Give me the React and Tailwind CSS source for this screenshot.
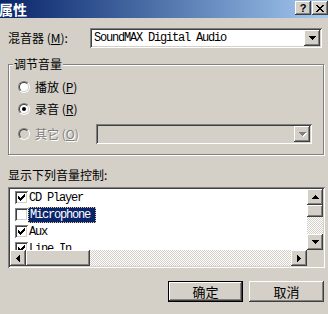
import React from 'react';

const raised = 'bg-[#d4d0c8] shadow-[inset_-1px_-1px_#404040,inset_1px_1px_#ffffff,inset_-2px_-2px_#808080,inset_2px_2px_#d4d0c8]';
const sunken = 'shadow-[inset_1px_1px_#808080,inset_-1px_-1px_#ffffff,inset_2px_2px_#404040,inset_-2px_-2px_#d4d0c8]';
const mono = "font-['Liberation_Mono',monospace] text-[12px] tracking-[-1.2px]";
const checker = 'bg-[image:conic-gradient(#ffffff_25%,#d4d0c8_0_50%,#ffffff_0_75%,#d4d0c8_0)] bg-[length:2px_2px]';
const disabledText = 'text-[#808080] [text-shadow:1px_1px_#ffffff]';

function ArrowDown({ color = '#000' }) {
  return (
    <svg width="7" height="4" viewBox="0 0 7 4">
      <path d="M0 0h7v1H0zM1 1h5v1H1zM2 2h3v1H2zM3 3h1v1H3z" fill={color} />
    </svg>
  );
}

function ArrowUp() {
  return (
    <svg width="7" height="4" viewBox="0 0 7 4">
      <path d="M3 0h1v1H3zM2 1h3v1H2zM1 2h5v1H1zM0 3h7v1H0z" fill="#000" />
    </svg>
  );
}

function ArrowLeft() {
  return (
    <svg width="4" height="7" viewBox="0 0 4 7">
      <path d="M3 0h1v7H3zM2 1h1v5H2zM1 2h1v3H1zM0 3h1v1H0z" fill="#000" />
    </svg>
  );
}

function ArrowRight() {
  return (
    <svg width="4" height="7" viewBox="0 0 4 7">
      <path d="M0 0h1v7H0zM1 1h1v5H1zM2 2h1v3H2zM3 3h1v1H3z" fill="#000" />
    </svg>
  );
}

function Radio({ checked, disabled }) {
  return (
    <div className="w-[12px] h-[12px] shrink-0 rounded-full border border-t-[#808080] border-l-[#808080] border-r-white border-b-white">
      <div
        className={`w-full h-full rounded-full border border-t-[#404040] border-l-[#404040] border-r-[#d4d0c8] border-b-[#d4d0c8] flex items-center justify-center ${
          disabled ? 'bg-[#d4d0c8]' : 'bg-white'
        }`}
      >
        {checked && <div className="w-[4px] h-[4px] rounded-full bg-black" />}
      </div>
    </div>
  );
}

function Checkbox({ checked }) {
  return (
    <div className={`w-[13px] h-[13px] shrink-0 bg-white flex items-center justify-center ${sunken}`}>
      {checked && (
        <svg width="7" height="7" viewBox="0 0 7 7">
          <path d="M0 2h1v3H0zM1 3h1v3H1zM2 4h1v3H2zM3 3h1v3H3zM4 2h1v3H4zM5 1h1v3H5zM6 0h1v3H6z" fill="#000" />
        </svg>
      )}
    </div>
  );
}

const items = [
  { name: 'CD Player', checked: true },
  { name: 'Microphone', checked: false, selected: true },
  { name: 'Aux', checked: true },
  { name: 'Line In', checked: true },
];

export default function App() {
  return (
    <div className="w-[328px] h-[314px] overflow-hidden bg-[#d4d0c8] text-black text-[12px] leading-[14px] font-['Noto_Sans_CJK_SC',sans-serif]">
      {/* title bar */}
      <div className="h-[18px] flex justify-between bg-linear-to-r from-[#0a246a] to-[#a6caf0]">
        <span className="-ml-px text-white font-bold text-[14px] leading-[18px]">属性</span>
        <div className="flex gap-[1px] pt-[1px]">
          <div className={`w-[16px] h-[14px] flex items-center justify-center ${raised}`}>
            <span className="font-['Liberation_Sans',sans-serif] font-bold text-[11px] leading-[11px]">?</span>
          </div>
          <div className={`w-[16px] h-[14px] flex items-center justify-center ${raised}`}>
            <svg width="8" height="7" viewBox="0 0 8 7">
              <path
                d="M0 0h2v1H0zM6 0h2v1H6zM1 1h2v1H1zM5 1h2v1H5zM2 2h4v1H2zM3 3h2v1H3zM2 4h4v1H2zM1 5h2v1H1zM5 5h2v1H5zM0 6h2v1H0zM6 6h2v1H6z"
                fill="#000"
              />
            </svg>
          </div>
        </div>
      </div>

      {/* mixer */}
      <div className="mt-[10px] h-[20px] flex items-center">
        <span className="w-[90px] pl-[8px]">
          混音器 (<u>M</u>):
        </span>
        <div className={`w-[232px] h-[20px] bg-white flex items-center pl-[4px] pr-[2px] ${sunken}`}>
          <span className={`flex-1 ${mono}`}>SoundMAX Digital Audio</span>
          <div className={`w-[16px] h-[16px] flex items-center justify-center ${raised}`}>
            <ArrowDown />
          </div>
        </div>
      </div>

      {/* volume group */}
      <fieldset className="ml-[8px] mt-[9px] w-[316px] border border-[#808080] shadow-[inset_1px_1px_#ffffff,1px_1px_#ffffff]">
        <legend className="ml-[4px] px-[1px] bg-[#d4d0c8] leading-[14px]">调节音量</legend>
        <div className="pt-[5px] pb-[10px] pl-[9px]">
          <div className="h-[22px] flex items-center gap-[5px]">
            <Radio />
            <span>
              播放 (<u>P</u>)
            </span>
          </div>
          <div className="h-[22px] flex items-center gap-[5px]">
            <Radio checked />
            <span>
              录音 (<u>R</u>)
            </span>
          </div>
          <div className="mt-[4px] h-[20px] flex items-center">
            <div className="w-[78px] flex items-center gap-[5px]">
              <Radio disabled />
              <span className={disabledText}>
                其它 (<u>O</u>)
              </span>
            </div>
            <div className={`w-[216px] h-[20px] flex items-center justify-end pr-[2px] ${sunken}`}>
              <div className={`w-[16px] h-[16px] flex items-center justify-center ${raised}`}>
                <span className="[filter:drop-shadow(1px_1px_0_#ffffff)] flex">
                  <ArrowDown color="#808080" />
                </span>
              </div>
            </div>
          </div>
        </div>
      </fieldset>

      {/* controls list */}
      <div className="mt-[13px] pl-[8px] h-[14px]">显示下列音量控制:</div>
      <div className={`ml-[8px] mt-[5px] w-[317px] h-[81px] p-[2px] flex flex-col ${sunken}`}>
        <div className="flex-1 flex min-h-0">
          <div className="flex-1 bg-white overflow-hidden">
            {items.map((it) => (
              <div key={it.name} className="h-[17px] shrink-0 flex items-center pl-[5px]">
                <Checkbox checked={it.checked} />
                {it.selected ? (
                  <span className={`h-[16px] w-[68px] flex items-center pl-[1px] bg-[#0a246a] text-white border border-dotted border-[#e8c890] ${mono}`}>
                    {it.name}
                  </span>
                ) : (
                  <span className={`pl-[1px] ${mono}`}>{it.name}</span>
                )}
              </div>
            ))}
          </div>
          <div className="w-[16px] flex flex-col">
            <div className={`h-[16px] flex items-center justify-center ${raised}`}>
              <ArrowUp />
            </div>
            <div className={`h-[12px] ${raised}`} />
            <div className={`flex-1 ${checker}`} />
            <div className={`h-[16px] flex items-center justify-center ${raised}`}>
              <ArrowDown />
            </div>
          </div>
        </div>
        <div className="h-[16px] flex">
          <div className={`w-[16px] flex items-center justify-center ${raised}`}>
            <ArrowLeft />
          </div>
          <div className={`w-[64px] ${raised}`} />
          <div className={`flex-1 ${checker}`} />
          <div className={`w-[16px] flex items-center justify-center ${raised}`}>
            <ArrowRight />
          </div>
          <div className="w-[16px] bg-[#d4d0c8]" />
        </div>
      </div>

      {/* buttons */}
      <div className="mt-[13px] flex justify-end gap-[6px] pr-[4px]">
        <button className={`w-[75px] h-[21px] border border-black flex items-center justify-center text-[13px] ${raised}`}>
          确定
        </button>
        <button className={`w-[75px] h-[21px] flex items-center justify-center text-[13px] ${raised}`}>
          取消
        </button>
      </div>
    </div>
  );
}
